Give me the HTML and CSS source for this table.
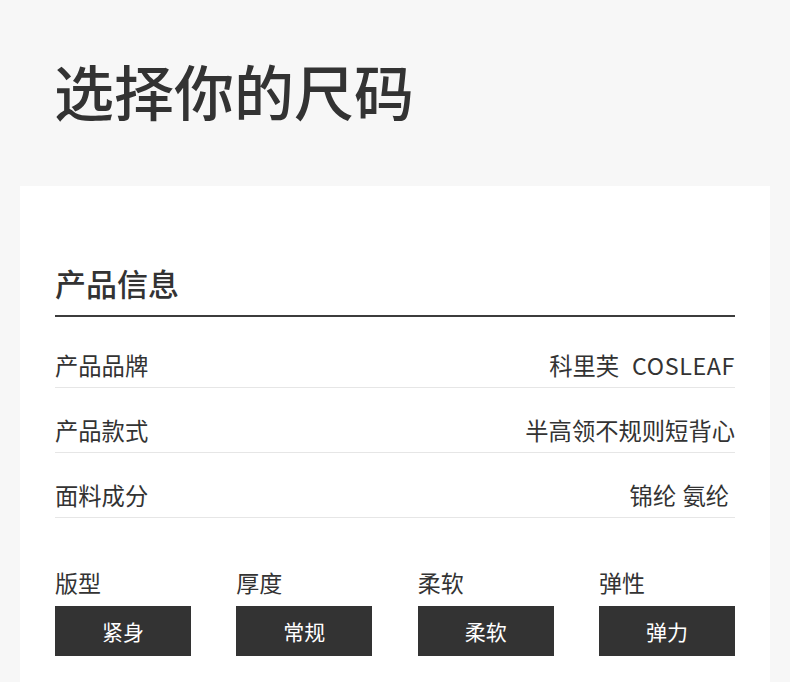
FILE: index.html
```html
<!DOCTYPE html>
<html lang="zh-CN">
<head>
<meta charset="utf-8">
<link rel="stylesheet" href="styles.css">
</head>
<body>
<header class="page-head">
  <h1 class="page-title">选择你的尺码</h1>
</header>
<main class="card">
  <h2 class="section-title">产品信息</h2>
  <div class="rows">
    <div class="row"><span class="key">产品品牌</span><span class="val">科里芙<span class="latin">COSLEAF</span></span></div>
    <div class="row"><span class="key">产品款式</span><span class="val">半高领不规则短背心</span></div>
    <div class="row"><span class="key">面料成分</span><span class="val val-pad">锦纶 氨纶</span></div>
  </div>
  <div class="attrs">
    <div class="attr"><div class="attr-label">版型</div><div class="attr-tag">紧身</div></div>
    <div class="attr"><div class="attr-label">厚度</div><div class="attr-tag">常规</div></div>
    <div class="attr"><div class="attr-label">柔软</div><div class="attr-tag">柔软</div></div>
    <div class="attr"><div class="attr-label">弹性</div><div class="attr-tag">弹力</div></div>
  </div>
</main>
</body>
</html>
```

FILE: styles.css
```css
html, body {
  margin: 0;
  padding: 0;
}
body {
  background: #f7f7f7;
  font-family: "Noto Sans CJK SC", "Noto Sans", "Liberation Sans", sans-serif;
  color: #333333;
  width: 790px;
  height: 682px;
  overflow: hidden;
}
.page-head {
  height: 186px;
  display: flex;
  align-items: center;
  padding: 0 54px 6px;
  box-sizing: border-box;
}
.page-title {
  margin: 0;
  font-size: 60px;
  line-height: 70px;
  font-weight: 500;
  color: #333333;
}
.card {
  margin: 0 20px;
  background: #ffffff;
  padding: 77px 35px 40px;
  height: 496px;
  box-sizing: border-box;
}
.section-title {
  margin: 0;
  font-size: 31px;
  line-height: 40px;
  font-weight: 500;
  padding-bottom: 12px;
  border-bottom: 2px solid #3c3c3c;
}
.rows {
  padding-top: 6px;
}
.row {
  display: flex;
  justify-content: space-between;
  align-items: center;
  font-size: 23.3px;
  line-height: 24px;
  padding: 30px 0 10px;
  border-bottom: 1px solid #e6e6e6;
}
.val {
  white-space: pre;
}
.val-pad {
  padding-right: 6px;
  word-spacing: 1px;
}
.latin {
  margin-left: 13px;
  letter-spacing: 0.6px;
}
.attrs {
  display: grid;
  grid-template-columns: repeat(4, 136px);
  justify-content: space-between;
  margin-top: 52px;
}
.attr-label {
  font-size: 23px;
  line-height: 24px;
}
.attr-tag {
  margin-top: 12px;
  height: 50px;
  background: #333333;
  color: #ffffff;
  font-size: 21px;
  display: flex;
  align-items: center;
  justify-content: center;
}
```
